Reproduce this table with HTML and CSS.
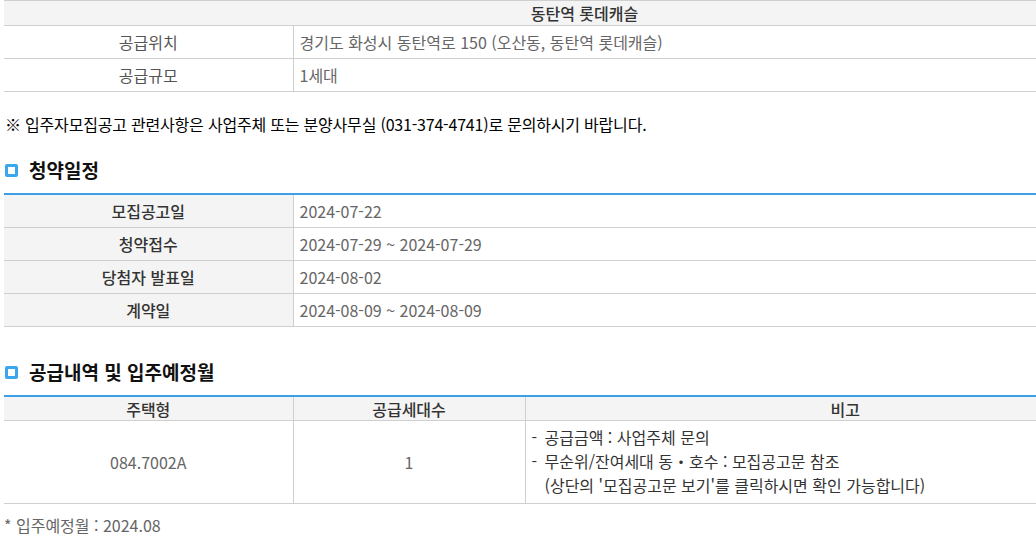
FILE: index.html
```html
<!DOCTYPE html>
<html lang="ko">
<head>
<meta charset="utf-8">
<link rel="stylesheet" href="styles.css">
</head>
<body>
<div class="page">
  <table class="tbl info">
    <colgroup><col class="c1"><col></colgroup>
    <tr class="head"><th colspan="2">동탄역 롯데캐슬</th></tr>
    <tr><td class="lbl">공급위치</td><td class="val">경기도 화성시 동탄역로 150 (오산동, 동탄역 롯데캐슬)</td></tr>
    <tr><td class="lbl">공급규모</td><td class="val">1세대</td></tr>
  </table>

  <p class="notice">※ 입주자모집공고 관련사항은 사업주체 또는 분양사무실 (031-374-4741)로 문의하시기 바랍니다.</p>

  <h2 class="sec"><span class="ico"></span>청약일정</h2>
  <table class="tbl sched">
    <colgroup><col class="c1"><col></colgroup>
    <tr><th>모집공고일</th><td class="val">2024-07-22</td></tr>
    <tr><th>청약접수</th><td class="val">2024-07-29 ~ 2024-07-29</td></tr>
    <tr><th>당첨자 발표일</th><td class="val">2024-08-02</td></tr>
    <tr><th>계약일</th><td class="val">2024-08-09 ~ 2024-08-09</td></tr>
  </table>

  <h2 class="sec sec2"><span class="ico"></span>공급내역 및 입주예정월</h2>
  <table class="tbl supply">
    <colgroup><col class="c1"><col class="c2"><col></colgroup>
    <tr class="head"><th>주택형</th><th>공급세대수</th><th>비고</th></tr>
    <tr class="body">
      <td class="ctr">084.7002A</td>
      <td class="ctr">1</td>
      <td class="note">
        <ul class="dash">
          <li>공급금액 : 사업주체 문의</li>
          <li>무순위/잔여세대 동・호수 : 모집공고문 참조<br>(상단의 '모집공고문 보기'를 클릭하시면 확인 가능합니다)</li>
        </ul>
      </td>
    </tr>
  </table>
  <p class="foot">* 입주예정월 : 2024.08</p>
</div>
</body>
</html>
```
FILE: styles.css
```css
html, body {
  margin: 0;
  padding: 0;
  background: #fff;
  overflow: hidden;
}
body {
  font-family: "Noto Sans CJK KR", "Noto Sans", sans-serif;
  font-size: 16px;
  color: #333;
}
.page {
  padding-left: 4px;
  width: 1161px;
}
.tbl {
  width: 100%;
  border-collapse: collapse;
  table-layout: fixed;
}
.tbl .c1 { width: 289px; }
.tbl .c2 { width: 232px; }
.tbl th, .tbl td {
  border: 1px solid #cfcfcf;
  padding: 0 6px;
  line-height: 22px;
}
.tbl tr > :first-child { border-left: 0; }
.tbl tr > :last-child { border-right: 0; }

.info { border-top: 1px solid #cfcfcf; }
.info .head th {
  background: #f4f4f4;
  height: 24px;
  font-weight: 500;
  color: #333;
  text-align: center;
  padding: 0;
}
.info td { height: 32px; padding: 0 6px; }
.info .lbl { text-align: center; color: #555; }
.val { color: #666; text-align: left; }

.notice {
  margin: 21px 0 0 1px;
  line-height: 22px;
  color: #000;
  font-weight: 400;
  letter-spacing: -0.2px;
}

.sec {
  margin: 22px 0 10px 0;
  font-size: 19px;
  line-height: 26px;
  font-weight: 700;
  color: #111;
  display: flex;
  align-items: center;
  gap: 11px;
}
.sec2 { margin-top: 32px; }
.ico {
  width: 13px;
  height: 13px;
  box-sizing: border-box;
  border: 3px solid #3aa6ee;
  border-radius: 2px;
  background: #fff;
  margin-left: 1px;
}

.sched, .supply { border-top: 2px solid #3f9fe4; }
.sched th {
  background: #f4f4f4;
  color: #333;
  font-weight: 500;
  text-align: center;
  height: 32px;
}
.sched td { height: 32px; }

.supply .head th {
  background: #f4f4f4;
  color: #333;
  font-weight: 500;
  text-align: center;
  height: 23px;
}
.supply .ctr { text-align: center; color: #666; }
.supply .note { padding: 4px 6px 6px 6px; vertical-align: middle; color: #333; }
.dash {
  list-style: none;
  margin: 0;
  padding: 0 0 0 13px;
}
.dash li {
  position: relative;
  line-height: 24px;
}
.dash li::before {
  content: "-";
  position: absolute;
  left: -13px;
  top: 0;
}

.foot {
  margin: 10px 0 0 0;
  line-height: 22px;
  color: #666;
}
```
